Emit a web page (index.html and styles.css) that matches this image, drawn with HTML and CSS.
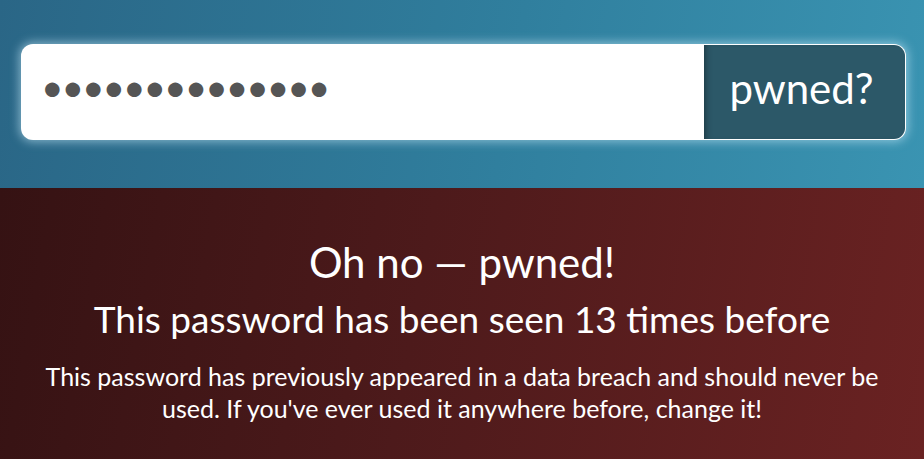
FILE: index.html
```html
<!DOCTYPE html>
<html lang="en">
<head>
<meta charset="utf-8">
<title>Pwned Passwords</title>
<link rel="stylesheet" href="styles.css">
</head>
<body>
<header class="search">
  <form class="search-group">
    <input class="search-input" type="password" value="aaaaaaaaaaaaaa" aria-label="Password">
    <button class="search-button" type="button">pwned?</button>
  </form>
</header>
<section class="result">
  <h1 class="result-title">Oh no — pwned!</h1>
  <h2 class="result-subtitle">This password has been seen 13 times before</h2>
  <p class="result-text">This password has previously appeared in a data breach and should never be used. If you've ever used it anywhere before, change it!</p>
</section>
</body>
</html>
```

FILE: styles.css
```css
html, body {
  margin: 0;
  padding: 0;
}
body {
  font-family: Lato, "Open Sans", sans-serif;
  background: #4a1a1b;
  color: #fff;
  height: 459px;
  overflow: hidden;
}
.search {
  height: 188px;
  box-sizing: border-box;
  padding: 44px 18px 0 21px;
  background: linear-gradient(100deg, #2a6686 0%, #307f9e 55%, #3a94b2 100%);
}
.search-group {
  display: flex;
  height: 96px;
  box-sizing: border-box;
  border: 1px solid rgba(255,255,255,0.85);
  border-radius: 12px;
  overflow: hidden;
  box-shadow: 0 0 10px 2px rgba(200,235,250,0.55);
  background: #fff;
}
.search-input {
  flex: 1;
  min-width: 0;
  border: 0;
  outline: 0;
  padding: 0 0 12px 19px;
  font-family: Lato, sans-serif;
  font-size: 39px;
  color: #555;
  letter-spacing: -2.1px;
  background: #fff;
}
.search-button {
  width: 201px;
  border: 0;
  margin: 0;
  padding: 0 6px 8px 0;
  background: #2c5868;
  color: #fff;
  font-family: Lato, sans-serif;
  font-size: 42px;
  box-shadow: inset 6px 0 6px -4px rgba(0,0,0,0.35);
}
.result {
  height: 271px;
  box-sizing: border-box;
  padding: 49px 20px 0;
  text-align: center;
  background: linear-gradient(100deg, #351213 0%, #4d1a1b 45%, #6a2222 100%);
}
.result-title {
  margin: 0;
  font-weight: 400;
  font-size: 42px;
  line-height: 50px;
}
.result-subtitle {
  margin: 10px 0 0;
  font-weight: 400;
  font-size: 37px;
  line-height: 44px;
}
.result-text {
  margin: 19px 0 0;
  font-size: 25px;
  line-height: 32px;
}
```
